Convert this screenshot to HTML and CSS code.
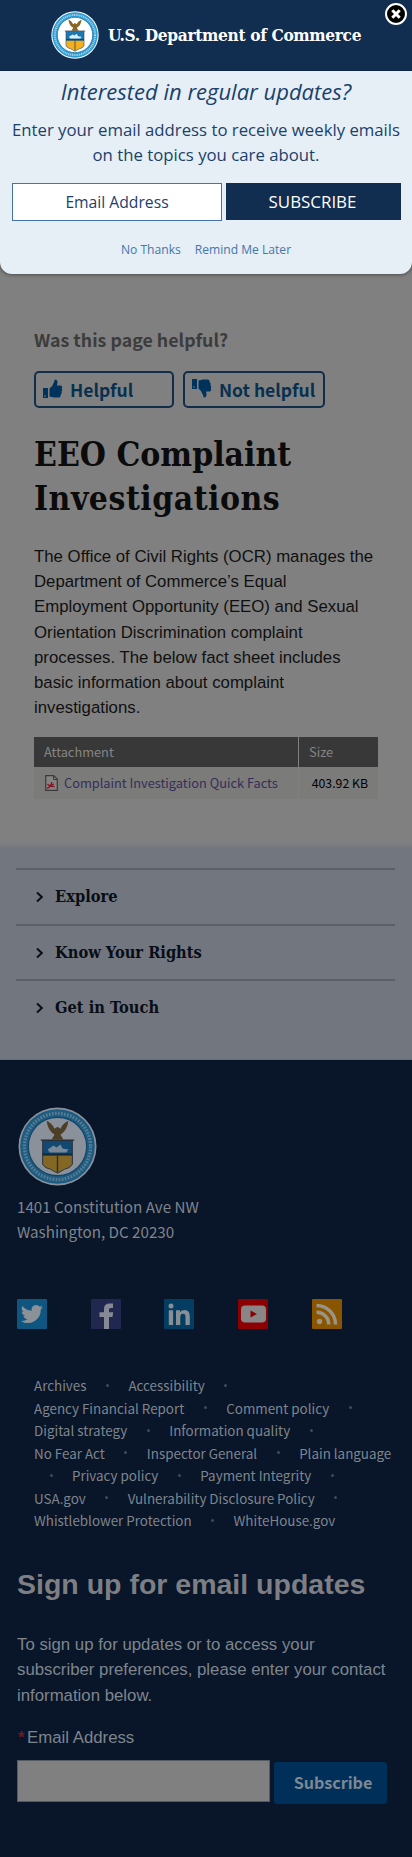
FILE: index.html
```html
<!DOCTYPE html>
<html lang="en">
<head>
<meta charset="utf-8">
<meta name="viewport" content="width=device-width">
<title>EEO Complaint Investigations</title>
<link rel="stylesheet" href="styles.css">
</head>
<body>
<svg width="0" height="0" class="defs" aria-hidden="true">
  <symbol id="seal" viewBox="0 0 80 80">
    <circle cx="40" cy="40" r="39.5" fill="#fff"/>
    <circle cx="40" cy="40" r="37.8" fill="#2b9bd4"/>
    <circle cx="40" cy="40" r="33.5" fill="none" stroke="#a5d3ea" stroke-width="3.400" stroke-dasharray="1.800 1.300"/>
    <circle cx="40" cy="40" r="29.500" fill="#fff" stroke="#1b6f9f" stroke-width="1.200"/>
    <path d="M29 14 q1 10 8 14 l-3 5 h12 l-3-5 q7-4 8-14 q-6 3-8 8 l-3-2 -3 2 q-3-6-8-8z" fill="#8a6426"/>
    <path d="M25 34 h30 v24 q-2 4-8 5 l-7 4 -7-4 q-6-1-8-5z" fill="#1a78b4" stroke="#444" stroke-width="1"/>
    <path d="M25.500 49h29v9q-2 3.500-7.500 4.500l-7 4-7-4q-5.500-1-7.500-4.500z" fill="#f2b01e"/>
    <path d="M40 49v17M23 33.500h34" stroke="#444" stroke-width="1.400"/>
    <path d="M30 43 l6-4 3 2 4-3 2 4 6 1 -2 3 H32z" fill="#dceefa"/>
    <path d="M25 48h30" stroke="#173b50" stroke-width="2"/>
  </symbol>
</svg>

<header class="brand">
  <svg class="brand-seal"><use href="#seal"/></svg>
  <span class="brand-name">U.S. Department of Commerce</span>
  <svg class="close" viewBox="0 0 24 24"><circle cx="12" cy="12" r="10" fill="#000" stroke="#fff" stroke-width="2"/><path d="M8.300 8.300l7.400 7.400M15.700 8.300l-7.400 7.400" stroke="#fff" stroke-width="3"/></svg>
</header>
<div class="popup-wrap">
<section class="popup">
  <h2 class="popup-title">Interested in regular updates?</h2>
  <p class="popup-text">Enter your email address to receive weekly emails<br>on the topics you care about.</p>
  <div class="popup-form"><div class="popup-input">Email Address</div><div class="popup-button">SUBSCRIBE</div></div>
  <div class="popup-links"><a>No Thanks</a><a>Remind Me Later</a></div>
</section>
</div>

<main class="content">
  <div class="question"><span>Was this page helpful?</span></div>
  <div class="votes">
    <div class="vote"><svg class="thumb" viewBox="0 0 20 20"><g id="thumb" fill="#00335c"><path d="M0 9h5v10H0z"/><path d="M6.500 9.500 Q10 7 11 3 Q11.300.5 12.500.5 Q15.500.8 14 6.500 H18 Q20 7.500 18.800 9.500 Q20 11 18.500 12.500 Q19.500 14.500 17.800 15.500 Q18 18 16 18.500 H11 L6.500 17.500z"/></g><circle cx="2" cy="17" r=".8" fill="#808080"/></svg><span>Helpful</span></div>
    <div class="vote"><svg class="thumb" viewBox="0 0 20 20"><g transform="matrix(1 0 0 -1 0 19)"><use href="#thumb"/></g><circle cx="2" cy="8" r=".8" fill="#808080"/></svg><span>Not helpful</span></div>
  </div>
  <h1 class="title">EEO Complaint<br><span class="title-wide">Investigations</span></h1>
  <p class="intro">The Office of Civil Rights (OCR) manages the<br>Department of Commerce’s Equal<br>Employment Opportunity (EEO) and Sexual<br>Orientation Discrimination complaint<br>processes. The below fact sheet includes<br>basic information about complaint<br>investigations.</p>
  <div class="files">
    <div class="cell head">Attachment</div><div class="cell head">Size</div>
    <div class="cell file"><svg class="pdf" viewBox="0 0 13 16"><path d="M.7.7h8l3.600 3.600v11H.7z" fill="#858484" stroke="#3a3a3a" stroke-width="1.200"/><path d="M8.500 1v3.500H12" fill="none" stroke="#3a3a3a"/><path d="M2 13.500q4-2 5-6.500M2.500 9q2 3 7 2.500M4 12l5-3" fill="none" stroke="#8c1020" stroke-width="1.300"/></svg><span>Complaint Investigation Quick Facts</span></div><div class="cell size">403.92 KB</div>
  </div>
</main>

<nav class="side">
  <div class="side-item"><svg class="chev" viewBox="0 0 8 12"><path d="M1 1.500L5.800 6 1 10.500"/></svg><span>Explore</span></div>
  <div class="side-item"><svg class="chev" viewBox="0 0 8 12"><path d="M1 1.500L5.800 6 1 10.500"/></svg><span>Know Your Rights</span></div>
  <div class="side-item"><svg class="chev" viewBox="0 0 8 12"><path d="M1 1.500L5.800 6 1 10.500"/></svg><span>Get in Touch</span></div>
</nav>

<footer class="footer">
  <svg class="footer-seal"><use href="#seal"/></svg>
  <address class="address">1401 Constitution Ave NW<br>Washington, DC 20230</address>
  <div class="social">
    <svg class="soc" viewBox="0 0 30 30"><rect width="30" height="30" rx="1" fill="#0e5680"/><path transform="translate(4 4) scale(.92)" fill="#8b9297" d="M23.900 4.600a10 10 0 0 1-2.800.8 5 5 0 0 0 2.100-2.700 10 10 0 0 1-3.100 1.200 4.900 4.900 0 0 0-8.400 4.500A14 14 0 0 1 1.600 3.200a4.900 4.900 0 0 0 1.500 6.500 5 5 0 0 1-2.200-.6 4.900 4.900 0 0 0 3.900 4.900 5 5 0 0 1-2.200.1 4.900 4.900 0 0 0 4.600 3.400A9.900 9.900 0 0 1 0 19.500a14 14 0 0 0 21.500-12.400 10 10 0 0 0 2.400-2.500z"/></svg>
    <svg class="soc" viewBox="0 0 30 30"><rect width="30" height="30" rx="1" fill="#20284f"/><path fill="#858994" d="M13 30V18H8.500v-4.700H13V10q0-5.500 5.500-5.500H22V9h-2.500Q18 9 18 10.500v2.800h4.200l-.7 4.700H18v12z"/></svg>
    <svg class="soc" viewBox="0 0 30 30"><rect width="30" height="30" rx="1" fill="#043d62"/><g fill="#878f96"><circle cx="7" cy="7" r="2.500"/><path d="M4.800 11.300h4.300V26H4.800zM12 11.300h4v2q1.300-2.400 4.500-2.400 5.300 0 5.300 6.300V26h-4.300v-8q0-3.300-2.400-3.300-2.800 0-2.800 3.300v8H12z"/></g></svg>
    <svg class="soc" viewBox="0 0 30 30"><rect width="30" height="30" rx="1" fill="#8c0003"/><rect x="3" y="6.500" width="25" height="17" rx="4" fill="#898686"/><path d="M12.500 11.500v7l6.500-3.500z" fill="#8c0003"/></svg>
    <svg class="soc" viewBox="0 0 30 30"><rect width="30" height="30" rx="1" fill="#8a5500"/><circle cx="7.500" cy="22.500" r="2.700" fill="#99948a"/><path d="M4.500 13.300a12 12 0 0 1 12.200 12.200M4.500 6.500a19 19 0 0 1 19 19" fill="none" stroke="#99948a" stroke-width="3.500"/></svg>
  </div>
  <div class="links">
    <div class="row"><a>Archives</a><i></i><a>Accessibility</a><i></i></div>
    <div class="row"><a>Agency Financial Report</a><i></i><a>Comment policy</a><i></i></div>
    <div class="row"><a>Digital strategy</a><i></i><a>Information quality</a><i></i></div>
    <div class="row"><a>No Fear Act</a><i></i><a>Inspector General</a><i></i><a>Plain language</a></div>
    <div class="row wrapped"><i></i><a>Privacy policy</a><i></i><a>Payment Integrity</a><i></i></div>
    <div class="row"><a>USA.gov</a><i></i><a>Vulnerability Disclosure Policy</a><i></i></div>
    <div class="row"><a>Whistleblower Protection</a><i></i><a>WhiteHouse.gov</a></div>
  </div>
  <h2 class="signup">Sign up for email updates</h2>
  <p class="note">To sign up for updates or to access your<br>subscriber preferences, please enter your contact<br>information below.</p>
  <div class="label"><b>*</b>Email Address</div>
  <div class="form"><div class="input"></div><div class="button">Subscribe</div></div>
</footer>
</body>
</html>
```
FILE: styles.css
```css
* { box-sizing: border-box; }
body { margin: 0; width: 412px; height: 1857px; background: #808080; font-family: "Noto Sans CJK SC", "Noto Sans", sans-serif; overflow-x: hidden; }
h1, h2, p { margin: 0; }
.defs { position: absolute; }
.brand { position: relative; height: 71px; background: #112e51; border-bottom: 1px solid #0d2544; display: flex; align-items: center; padding-left: 51px; }
.brand-seal { width: 48px; height: 48px; }
.brand-name { margin-left: 9px; color: #fff; font: bold 17.200px/24px "DejaVu Serif Condensed", "DejaVu Serif", serif; font-stretch: condensed; letter-spacing: -.36px; white-space: nowrap; }
.close { position: absolute; right: 4px; top: 2px; width: 24px; height: 24px; }
.popup-wrap { background: #808080; height: 203px; }
.popup { height: 203px; background: #e6eff5; border-radius: 0 0 12px 12px; box-shadow: 0 0 4px #333; text-align: center; color: #1b416b; font-family: "Open Sans", sans-serif; clip-path: inset(0 0 -6px 0); }
.popup-title { padding-top: 5px; font-size: 22px; line-height: 30px; font-style: italic; font-weight: 400; }
.popup-text { padding-top: 11px; font-size: 16.750px; line-height: 25.300px; white-space: nowrap; }
.popup-form { display: flex; gap: 4px; padding: 15px 11px 0 12px; }
.popup-input { width: 210px; height: 38px; border: 1px solid #4373aa; background: #fff; font-size: 15.700px; line-height: 36px; }
.popup-button { width: 175px; height: 37px; padding-right: 2px; background: #112e51; color: #fff; font-size: 16.900px; line-height: 37px; }
.popup-links { display: flex; justify-content: center; gap: 14px; padding-top: 20px; color: #4377ab; font-size: 12.100px; line-height: 18px; }

.content { height: 568px; padding: 51px 34px 0; }
.question { height: 28px; line-height: 28px; font-size: 17.800px; font-weight: bold; color: #3c3c3c; }
.votes { display: flex; gap: 9px; margin-top: 18px; }
.vote { display: flex; align-items: center; width: 140px; height: 37px; border: 2px solid #102d49; border-radius: 5px; padding: 0 0 0 7px; color: #07304f; font-size: 17.500px; font-weight: bold; line-height: 32px; white-space: nowrap; }
.vote + .vote { width: 142px; }
.thumb { width: 20px; height: 20px; margin: 0 7px 2px 0; }
.title { margin-top: 25px; font: bold 33.400px/44px "DejaVu Serif Condensed", "DejaVu Serif", serif; font-stretch: condensed; color: #0b0b0b; white-space: nowrap; }
.title-wide { letter-spacing: .5px; }
.intro { margin-top: 23px; font: 16.800px/25.200px "Liberation Sans", Arial, sans-serif; color: #101010; white-space: nowrap; }
.files { display: grid; grid-template-columns: 264px 79px; grid-template-rows: 30px 32px; column-gap: 1px; margin-top: 17px; font-size: 12.800px; }
.cell { display: flex; align-items: center; padding: 0 10px 1px; white-space: nowrap; background: #7b7b7a; color: #000; }
.head { background: #383838; color: #858585; }
.file { color: #352e5c; }
.pdf { flex: none; width: 13px; height: 16px; margin: 0 6px 0 1px; }
.size { justify-content: flex-end; font-size: 12.300px; }

.side { height: 218px; padding: 26px 17px 0 16px; background: linear-gradient(#808080, #72767e 7px); border-bottom: 1px solid #647078; }
.side-item { display: flex; align-items: center; height: 55.700px; border-top: 2px solid #5c6069; padding: 0 0 0 20px; color: #080d16; font: bold 16.300px/24px "DejaVu Serif Condensed", "DejaVu Serif", serif; font-stretch: condensed; }
.chev { width: 8px; height: 12px; margin-right: 11px; fill: none; stroke: #0a0f18; stroke-width: 2; }

.footer { height: 797px; padding: 47px 17px 0; background: #091528; color: #7e858e; }
.footer-seal { display: block; width: 79px; height: 79px; margin-left: 1px; opacity: .53; }
.address { margin-top: 8px; font-style: normal; font-size: 15.200px; line-height: 25px; }
.social { display: flex; gap: 43.700px; margin-top: 55px; }
.soc { width: 30px; height: 30px; }
.links { margin: 45px 0 0 17px; font-size: 13.400px; line-height: 22.500px; }
.row { display: flex; height: 22.500px; white-space: nowrap; }
.row i { width: 42px; flex: none; display: flex; justify-content: center; align-items: center; }
.row i::before { content: ""; width: 3px; height: 3px; border-radius: 50%; background: #374c63; }
.wrapped { margin-left: -4px; }
.signup { margin-top: 32px; font: bold 28.500px/40px "Liberation Sans", Arial, sans-serif; color: #7d7f84; white-space: nowrap; }
.note { margin-top: 28px; font: 16.800px/25.500px "Liberation Sans", Arial, sans-serif; white-space: nowrap; }
.label { margin-top: 17px; font: 16.800px/25px "Liberation Sans", Arial, sans-serif; }
.label b { display: inline-block; width: 10px; padding-left: 1px; color: #6d1c25; }
.form { display: flex; gap: 4px; margin-top: 10px; }
.input { width: 253px; height: 42px; background: #808080; border: 1px solid #565b62; }
.button { width: 113px; height: 42px; margin-top: 2px; padding-left: 5px; border-radius: 3px; background: #00305a; color: #7e8893; text-align: center; font-size: 16.100px; font-weight: bold; line-height: 40px; }
```
